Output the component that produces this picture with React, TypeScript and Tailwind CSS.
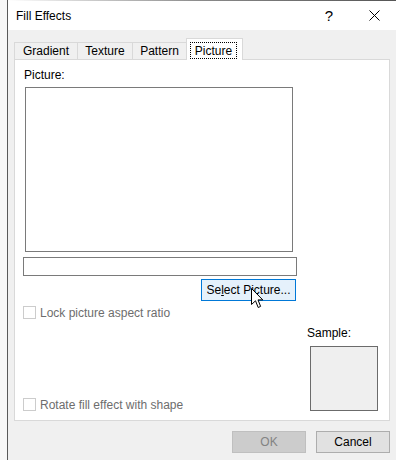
import React from 'react';

const font = { fontFamily: '"Liberation Sans", Arial, sans-serif' };

type TabProps = { label: string; width: string; selected?: boolean };

function Tab({ label, width, selected = false }: TabProps) {
  if (selected) {
    return (
      <div
        className={`relative z-10 -mb-px flex h-[22px] ${width} items-start border-x border-t border-[#d9d9d9] bg-white pl-[3px] pt-[3px]`}
      >
        <div className="flex h-[17px] w-[47px] items-center justify-center border border-dotted border-black text-[12px] leading-[16px] text-black">
          {label}
        </div>
      </div>
    );
  }
  return (
    <div
      className={`flex h-[17px] ${width} items-center justify-center border-l border-t border-[#d9d9d9] text-[12px] leading-[16px] text-black`}
    >
      {label}
    </div>
  );
}

function Checkbox({ label }: { label: string }) {
  return (
    <div className="flex h-[13px] items-center gap-[4px]">
      <div className="h-[13px] w-[13px] border border-[#cccccc] bg-white" />
      <span className="text-[12px] leading-[16px] text-[#6d6d6d]">{label}</span>
    </div>
  );
}

function Cursor() {
  return (
    <svg
      className="pointer-events-none absolute left-[251px] top-[288px] z-20"
      width="13"
      height="21"
      viewBox="0 0 13 21"
    >
      <path
        d="M0.5 0.5 L0.5 16.5 L4.5 12.8 L7.2 19.5 L9.6 18.4 L7 11.9 L11.8 11.9 Z"
        fill="#ffffff"
        stroke="#000000"
        strokeWidth="1"
        strokeLinejoin="miter"
      />
    </svg>
  );
}

export default function App() {
  return (
    <div className="relative flex h-[460px] w-[396px] overflow-hidden bg-[#f7f7f7]" style={font}>
      <div className="w-[7px] shrink-0" />

      {/* Window */}
      <div className="flex flex-1 flex-col border-l border-[#595959] bg-[#f0f0f0]">
        {/* Title bar */}
        <div className="flex h-[30px] shrink-0 flex-col bg-white">
          <div className="h-px bg-gradient-to-r from-white via-[#8a8a8a] to-[#555555]" />
          <div className="flex flex-1 items-center pl-[8px]">
            <span className="text-[12px] leading-[16px] text-black">Fill Effects</span>
            <span className="ml-auto w-[46px] text-center text-[15px] leading-[18px] text-black">?</span>
            <div className="flex w-[44px] items-center justify-center">
              <svg width="11" height="11" viewBox="0 0 11 11">
                <path d="M0.5 0.5 L10.5 10.5 M10.5 0.5 L0.5 10.5" stroke="#000" strokeWidth="1" />
              </svg>
            </div>
          </div>
        </div>

        {/* Body */}
        <div className="flex flex-1 flex-col px-[6px] pt-[8px]">
          {/* Tabs */}
          <div className="flex h-[21px] items-end">
            <Tab label="Gradient" width="w-[63px]" />
            <Tab label="Texture" width="w-[55px]" />
            <Tab label="Pattern" width="w-[54px]" />
            <Tab label="Picture" width="w-[57px]" selected />
          </div>

          {/* Panel */}
          <div className="flex h-[362px] flex-col border border-[#d9d9d9] bg-white pt-[7px]">
            <div className="pl-[9px] text-[12px] leading-[16px] text-black">Picture:</div>
            <div className="ml-[10px] mt-[4px] h-[165px] w-[268px] border border-[#7a7a7a] bg-white" />
            <div className="ml-[8px] mt-[5px] h-[19px] w-[274px] border border-[#7a7a7a] bg-white" />
            <div className="ml-[186px] mt-[3px] flex h-[22px] w-[95px] items-center justify-center border border-[#0078d7] bg-[#e5f1fb] text-[12px] leading-[16px] text-black">
              <span>
                Se<span className="underline">l</span>ect Picture...
              </span>
            </div>

            <div className="mt-[5px] flex h-[105px]">
              <div className="ml-[8px] flex flex-col justify-between">
                <Checkbox label="Lock picture aspect ratio" />
                <Checkbox label="Rotate fill effect with shape" />
              </div>
              <div className="ml-auto mr-[11px] flex flex-col items-start justify-end">
                <div className="-ml-[3px] text-[12px] leading-[16px] text-black">Sample:</div>
                <div className="mt-[5px] h-[65px] w-[68px] border border-[#6b6b6b] bg-[#efefef]" />
              </div>
            </div>
          </div>

          {/* Buttons */}
          <div className="mt-[10px] flex justify-end gap-[10px]">
            <div className="flex h-[22px] w-[74px] items-center justify-center border border-[#bfbfbf] bg-[#cccccc] text-[12px] leading-[16px] text-[#838383]">
              OK
            </div>
            <div className="flex h-[22px] w-[74px] items-center justify-center border border-[#adadad] bg-[#e1e1e1] text-[12px] leading-[16px] text-black">
              Cancel
            </div>
          </div>
        </div>
      </div>

      <Cursor />
    </div>
  );
}
